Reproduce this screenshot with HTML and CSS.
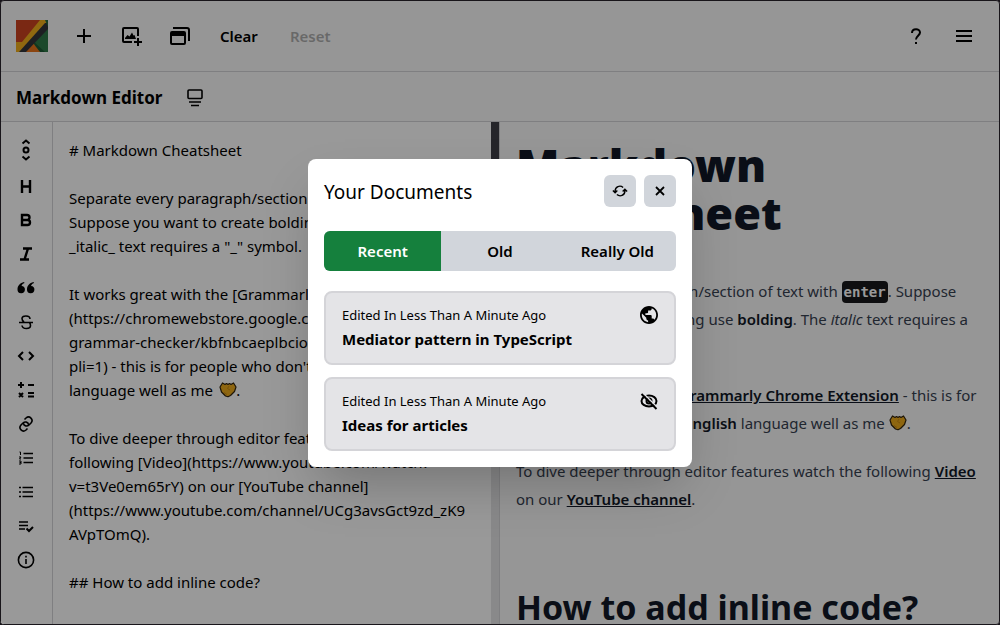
FILE: index.html
```html
<!DOCTYPE html>
<html lang="en">
<head>
<meta charset="utf-8">
<meta name="viewport" content="width=device-width, initial-scale=1">
<title>Markdown Editor</title>
<link rel="stylesheet" href="styles.css">
</head>
<body>
<svg class="defs" aria-hidden="true">
  <symbol id="fists" viewBox="0 0 18 16">
    <path d="M1 5 3.500 1 6 2.500 7.500 1.500 9 2.500l1.500-1 1.500 1L14.500 1 17 5l-1.500 4.500-4 4L9 14.800 6.500 14l-4-4Z" fill="#edaa1c" stroke="#33250e" stroke-width="1.200" stroke-linejoin="round"/>
    <path d="M10 4 8.500 6.500 11 8M5 10.500l3 2" fill="none" stroke="#c98a14"/>
  </symbol>
</svg>
<div class="app">
  <header class="topbar">
    <a class="logo" href="#" aria-label="Home">
      <svg viewBox="0 0 32 32">
        <path d="M0 0h32v32H0z" fill="#cc4420"/>
        <path d="M0 22h6L24 0h8v6L6 32H0z" fill="#f0ad1c"/>
        <path d="M32 6v26H12l5-10z" fill="#25693c"/>
        <path d="M18 22 32 8v24h-5z" fill="#2f7a48"/>
        <path d="M18 22 29 32H21z" fill="#1d5a34"/>
        <path d="M9 32 17 23l7 9z" fill="#e8741c"/>
        <path d="M29 3h3v6L10 32H3z" fill="#33353a"/>
        <path d="M29 0h3v7z" fill="#25693c"/>
      </svg>
    </a>
    <button class="icon-btn" aria-label="New document"><svg viewBox="0 0 24 24"><path d="M12 5v14M5 12h14" class="s2"/></svg></button>
    <button class="icon-btn" aria-label="Add image"><svg viewBox="0 0 24 24"><path d="M18 12V5a1 1 0 0 0-1-1H4a1 1 0 0 0-1 1v12a1 1 0 0 0 1 1h8M18 14v8M14 18h8" class="s2"/><path d="M5 15v-1l2.500-3 2 1.500 2.500-4 1.500 3 1-.5 1.500 4z" fill="currentColor"/></svg></button>
    <button class="icon-btn" aria-label="Documents"><svg viewBox="0 0 24 24"><path d="M5 4h14a2 2 0 0 1 2 2v11" class="s2"/><rect x="3" y="8" width="14" height="12" rx="1" class="s2"/><path d="M3 8h14v4H3z" fill="currentColor"/></svg></button>
    <button class="text-btn">Clear</button>
    <button class="text-btn" disabled>Reset</button>
    <div class="topbar-end">
      <button class="icon-btn" aria-label="Help"><svg viewBox="0 0 24 24"><path d="M8 9c0-5 8-5 8-.5 0 3-4 3.500-4 7" class="s2"/><path d="M11 18h2v2h-2z" fill="currentColor"/></svg></button>
      <button class="icon-btn" aria-label="Menu"><svg viewBox="0 0 24 24"><path d="M4 7h16M4 12h16M4 17h16" class="s2"/></svg></button>
    </div>
  </header>

  <div class="titlebar">
    <h1 class="doc-title">Markdown Editor</h1>
    <button class="icon-btn" aria-label="Change view"><svg viewBox="0 0 24 24"><rect x="6" y="4" width="14" height="8.500" rx="1" class="s15"/><path d="M7 16h12M9 19.500h8" class="s15"/></svg></button>
  </div>

  <main class="workspace">
    <nav class="rail" aria-label="Formatting">
      <button class="rail-btn tall" aria-label="Move"><svg viewBox="0 0 18 22"><path d="m5.500 4.500 3.500-3 3.500 3M5.500 17.500l3.500 3 3.500-3" class="s2"/><circle cx="9" cy="11" r="2.500" class="s2"/></svg></button>
      <button class="rail-btn" aria-label="Heading"><svg viewBox="0 0 18 18"><path d="M5 3v13M13 3v13M5 9.500h8" class="s25"/></svg></button>
      <button class="rail-btn" aria-label="Bold"><svg viewBox="0 0 18 18"><path d="M5 4h5a2.300 2.300 0 0 1 0 5H5zM5 9h5.500a2.500 2.500 0 0 1 0 5H5z" class="s25"/></svg></button>
      <button class="rail-btn" aria-label="Italic"><svg viewBox="0 0 18 18"><path d="M6 3.500h9M3 14.500h9M11 3.500l-3.500 11" class="s25"/></svg></button>
      <button class="rail-btn" aria-label="Quote"><svg viewBox="0 0 18 18"><path d="M7 3C3 4 .5 6.500.5 10.500a3.700 3.700 0 1 0 4-3.600C5 5.500 6 4.500 7.500 4zM16.500 3c-4 1-6.500 3.500-6.500 7.500a3.700 3.700 0 1 0 4-3.600c.5-1.400 1.500-2.400 3-2.900z" fill="currentColor"/></svg></button>
      <button class="rail-btn" aria-label="Strikethrough"><svg viewBox="0 0 18 18"><path d="M13 6c0-4-8-4-8-.5C5 7 5.500 8 7 9M2 9.500h14M5 12.500c.5 4 8.500 4 8.500 0 0-1-.3-2-1-3" class="s15"/></svg></button>
      <button class="rail-btn" aria-label="Code"><svg viewBox="0 0 18 18"><path d="M6 5 2 9l4 4M12 5l4 4-4 4" class="s2"/></svg></button>
      <button class="rail-btn" aria-label="Math"><svg viewBox="0 0 18 18"><path d="M1 4h6M4 1v6M11 4h6M11 12h6M11 15.500h6M2 12l4 4M6 12l-4 4" class="s2"/></svg></button>
      <button class="rail-btn" aria-label="Link"><svg viewBox="0 0 18 18"><path d="M7.500 4.500 9 3c3.500-3 8 1.500 5 5l-2 2c-2 1.800-5 1-5.500-1.500M10.500 13.500 9 15c-3.500 3-8-1.500-5-5l2-2c2-1.800 5-1 5.500 1.500" class="s15"/></svg></button>
      <button class="rail-btn" aria-label="Ordered list"><svg viewBox="0 0 18 18"><path d="M6.500 4.500H16M6.500 9H16M6.500 13.500H16" class="s15"/><path d="M2.500 3h1v3M2 8h2L2.500 10H4M2 12h2v3H2M2.500 13.500H4" class="s1"/></svg></button>
      <button class="rail-btn" aria-label="Bulleted list"><svg viewBox="0 0 18 18"><path d="M5.500 4.500H16M5.500 9H16M5.500 13.500H16M2 4.500h2M2 9h2M2 13.500h2" class="s15"/></svg></button>
      <button class="rail-btn" aria-label="Task list"><svg viewBox="0 0 18 18"><path d="M2 5h9M2 8.500h9M2 12h6" class="s15"/><path d="m9.500 11.500 2.500 2.500 4-4" class="s2"/></svg></button>
      <button class="rail-btn" aria-label="Information"><svg viewBox="0 0 18 18"><circle cx="9" cy="9" r="7.600" class="s15"/><path d="M9 8v5M9 4.800v1.800" class="s15"/></svg></button>
    </nav>

    <section class="editor">
      <textarea class="source" aria-label="Markdown source" spellcheck="false" wrap="off">
# Markdown Cheatsheet

Separate every paragraph/section of text with **enter**.
Suppose you want to create bolding use **bolding**. The
_italic_ text requires a "_" symbol.

It works great with the [Grammarly Chrome Extension]
(https://chromewebstore.google.com/detail/grammarly-
grammar-checker/kbfnbcaeplbcioakkpcpgfkobkghlhen?
pli=1) - this is for people who don't know **English**
language well as me      .

To dive deeper through editor features watch the
following [Video](https://www.youtube.com/watch?
v=t3Ve0em65rY) on our [YouTube channel]
(https://www.youtube.com/channel/UCg3avsGct9zd_zK9
AVpTOmQ).

## How to add inline code?
</textarea>
      <svg class="fists source-fists" role="img" aria-label="Fists"><use href="#fists"/></svg>
      <div class="track" aria-hidden="true"><div class="thumb"></div></div>
    </section>

    <article class="preview">
      <h1>Markdown Cheatsheet</h1>
      <p>Separate every paragraph/section of text with <code>enter</code>. Suppose you want to create bolding use <strong>bolding</strong>. The <em>italic</em> text requires a "_" symbol.</p>
      <p>It works great with the <a href="#">Grammarly Chrome Extension</a> - this is for people who don't know <strong>English</strong> language well as me <svg class="fists" role="img" aria-label="Fists"><use href="#fists"/></svg>.</p>
      <p>To dive deeper through editor features watch the following <a href="#">Video</a> on our <a href="#">YouTube channel</a>.</p>
      <h2>How to add inline code?</h2>
    </article>
  </main>

  <div class="backdrop">
    <div class="modal" role="dialog" aria-modal="true" aria-labelledby="modal-title">
      <div class="modal-head">
        <h2 class="modal-title" id="modal-title">Your Documents</h2>
        <button class="square-btn" aria-label="Refresh"><svg viewBox="0 0 18 18"><path d="M3.500 10.500V9c0-5 5.500-7 9-4M14.500 7.500V9c0 5-5.500 7-9 4M1 8.500 3.500 11 6 8.500M12 9.500 14.500 7 17 9.500" class="s15"/></svg></button>
        <button class="square-btn" aria-label="Close"><svg viewBox="0 0 18 18"><path d="m4.500 4.500 9 9M13.500 4.500l-9 9" class="s2"/></svg></button>
      </div>
      <div class="tabs" role="tablist">
        <button class="tab active" role="tab" aria-selected="true">Recent</button>
        <button class="tab" role="tab" aria-selected="false">Old</button>
        <button class="tab" role="tab" aria-selected="false">Really Old</button>
      </div>
      <div class="cards">
        <button class="card">
          <span class="card-meta">Edited In Less Than A Minute Ago
            <svg viewBox="2 2 20 20"><path fill="currentColor" d="M12 2C6.480 2 2 6.480 2 12s4.480 10 10 10 10-4.480 10-10S17.520 2 12 2zm-1 17.930c-3.950-.49-7-3.850-7-7.930 0-.62.08-1.210.21-1.790L9 15v1c0 1.100.9 2 2 2v1.930zm6.900-2.540c-.26-.81-1-1.390-1.900-1.390h-1v-3c0-.55-.45-1-1-1H8v-2h2c.55 0 1-.45 1-1V7h2c1.100 0 2-.9 2-2v-.41c2.930 1.190 5 4.060 5 7.410 0 2.080-.8 3.970-2.100 5.390z"/></svg>
          </span>
          <span class="card-title">Mediator pattern in TypeScript</span>
        </button>
        <button class="card">
          <span class="card-meta">Edited In Less Than A Minute Ago
            <svg viewBox="0 0 18 18"><ellipse cx="9" cy="9" rx="7.500" ry="5.500" class="s2"/><circle cx="9" cy="9" r="2.500" class="s2"/><path d="m3 1 14 14" stroke="#e4e4e7" stroke-width="1.500"/><path d="m1.500 2 15 15" class="s2"/></svg>
          </span>
          <span class="card-title">Ideas for articles</span>
        </button>
      </div>
    </div>
  </div>
</div>
</body>
</html>
```
FILE: styles.css
```css
* { box-sizing: border-box; }
body {
  margin: 0;
  background: #18151a;
  color: #000;
  font: 400 15px/24px "Noto Sans", "Open Sans", sans-serif;
}
button { font: inherit; color: inherit; background: none; border: 0; padding: 0; margin: 0; }
h1, h2, p { margin: 0; }
svg { display: block; }
.defs { position: absolute; width: 0; height: 0; }
.s1, .s15, .s2, .s25 { fill: none; stroke: currentColor; }
.s1 { stroke-width: 1; }
.s15 { stroke-width: 1.6; }
.s2 { stroke-width: 2; }
.s25 { stroke-width: 2.4; }

.app {
  position: relative;
  display: flex;
  flex-direction: column;
  height: 100vh;
  border: 1px solid #18151a;
  border-radius: 4px;
  overflow: hidden;
  background: #fafafa;
}

.topbar {
  display: flex;
  align-items: center;
  gap: 24px;
  flex: none;
  height: 71px;
  padding: 0 23px 0 15px;
  border-bottom: 1px solid #d4d4d8;
}
.logo svg { width: 32px; height: 32px; }
.icon-btn svg { width: 24px; height: 24px; }
.text-btn { padding: 0 4px; font-weight: 600; }
.text-btn:disabled { opacity: .3; }
.topbar-end { display: flex; gap: 24px; margin-left: auto; }

.titlebar {
  display: flex;
  align-items: center;
  gap: 20px;
  flex: none;
  height: 50px;
  padding: 2px 15px 0;
  border-bottom: 1px solid #d4d4d8;
}
.doc-title { font-size: 17px; font-weight: 700; line-height: 28px; }

.workspace {
  display: grid;
  grid-template-columns: 52px minmax(0, 447fr) minmax(0, 499fr);
  flex: 1;
  min-height: 0;
}
.rail {
  display: flex;
  flex-direction: column;
  align-items: center;
  gap: 16px;
  padding: 17px 2px 0 0;
  background: #fff;
  border-right: 1px solid #d4d4d8;
}
.rail-btn svg { width: 18px; height: 18px; }
.rail-btn.tall svg { height: 22px; }

.editor {
  position: relative;
  display: flex;
  min-height: 0;
  background: #fff;
  border-right: 1px solid #d4d4d8;
}
.source {
  flex: 1;
  min-width: 0;
  padding: 16px;
  border: 0;
  outline: 0;
  resize: none;
  overflow: hidden;
  background: none;
  color: #000;
  font: inherit;
}
.track { width: 8px; background: #e4e4e7; }
.thumb { height: 36%; background: #3f3f46; }
.fists { display: inline-block; width: 18px; height: 16px; vertical-align: -2px; }
.source-fists { position: absolute; left: 166px; top: 260px; }

.preview {
  padding: 19px 16px 0;
  min-width: 0;
  overflow: hidden;
  color: #374151;
  line-height: 28px;
}
.preview h1 {
  margin-bottom: 40px;
  color: #111827;
  font-size: 45px;
  font-weight: 900;
  line-height: 48px;
}
.preview p { margin-bottom: 20px; }
.preview h2 {
  margin-top: 74px;
  color: #111827;
  font-size: 34px;
  font-weight: 700;
  line-height: 40px;
}
.preview strong, .preview a { color: #111827; font-weight: 600; }
.preview code {
  padding: 3px 2px;
  border-radius: 4px;
  background: #18181b;
  color: #fff;
  font: 700 14px "DejaVu Sans Mono", monospace;
}

.backdrop {
  position: absolute;
  inset: 0;
  display: grid;
  place-items: center;
  background: rgba(0, 0, 0, .4);
}
.modal {
  width: 384px;
  max-width: 100%;
  padding: 16px;
  border-radius: 8px;
  background: #fff;
  box-shadow: 0 25px 50px -12px rgba(0, 0, 0, .25);
}
.modal-head { display: flex; align-items: center; gap: 8px; }
.modal-title { flex: 1; padding-top: 2px; font-size: 19px; font-weight: 400; line-height: 30px; }
.square-btn {
  display: grid;
  place-items: center;
  width: 32px;
  height: 32px;
  border-radius: 6px;
  background: #d1d5db;
}
.square-btn svg { width: 16px; height: 16px; }
.tabs {
  display: grid;
  grid-template-columns: repeat(3, 1fr);
  margin: 24px 0 20px;
  border-radius: 6px;
  overflow: hidden;
  background: #d1d5db;
}
.tab { height: 40px; font-weight: 600; }
.tab.active { background: #15803d; color: #fff; }
.cards { display: grid; gap: 12px; }
.card {
  display: grid;
  gap: 2px;
  padding: 12px 16px;
  border: 2px solid #d4d4d8;
  border-radius: 8px;
  background: #e4e4e7;
  text-align: left;
}
.card-meta {
  display: flex;
  align-items: center;
  justify-content: space-between;
  font-size: 13px;
  line-height: 20px;
}
.card-meta svg { width: 18px; height: 18px; }
.card-title { font-weight: 700; }
```
